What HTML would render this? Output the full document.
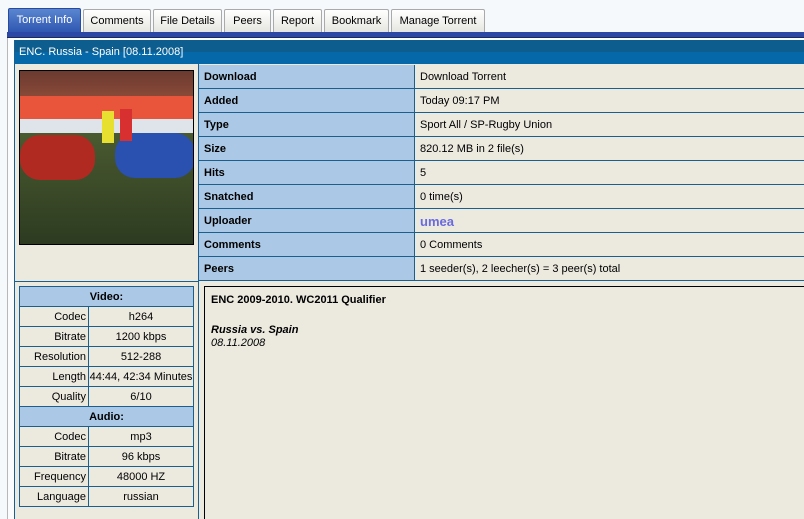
<!DOCTYPE html>
<html><head><meta charset="utf-8"><style>
*{margin:0;padding:0;box-sizing:border-box}
html,body{width:804px;height:519px;overflow:hidden}
body{background:#f6f9fc;font-family:"Liberation Sans",Arial,sans-serif;font-size:11px;color:#000;position:relative}
.tab{position:absolute;top:9px;height:23px;border:1px solid #aaa;border-bottom:none;background:linear-gradient(#fff,#e6e6e0);font-size:11px;text-align:center;line-height:22px;border-radius:2px 2px 0 0}
.tab.on{background:linear-gradient(#5a86d0,#2d55b0);color:#fff;border-color:#2a4aa0;top:8px;height:25px;line-height:23px}
.abs{position:absolute}
.lbl{position:absolute;left:199px;width:216px;height:24px;background:#abc9e6;border-bottom:1px solid #1b5f8e;border-right:1px solid #1b5f8e;font-weight:bold;padding-left:5px;padding-top:1px;line-height:23px}
.val{position:absolute;left:415px;width:389px;height:24px;background:#ece9df;border-bottom:1px solid #1b5f8e;padding-left:5px;padding-top:1px;line-height:23px}
.it td{border:1px solid #1b5f8e;height:20px;padding:0 2px;font-size:11px}
</style></head><body>
<div class="tab on" style="left:8px;width:73px">Torrent Info</div>
<div class="tab" style="left:83px;width:68px">Comments</div>
<div class="tab" style="left:153px;width:69px">File Details</div>
<div class="tab" style="left:224px;width:47px">Peers</div>
<div class="tab" style="left:273px;width:49px">Report</div>
<div class="tab" style="left:324px;width:65px">Bookmark</div>
<div class="tab" style="left:391px;width:94px">Manage Torrent</div>
<div class="abs" style="left:7px;top:32px;width:797px;height:5px;background:#2c48a6"></div>
<div class="abs" style="left:7px;top:37px;width:797px;height:1px;background:#1a2a5a"></div>
<div class="abs" style="left:7px;top:38px;width:797px;height:481px;background:#fbfcfd;border-left:1px solid #b8b8b8"></div>
<div class="abs" style="left:14px;top:40px;width:790px;height:479px;background:#ece9df;border-left:1px solid #1b5f8e"></div>
<div class="abs" style="left:15px;top:40px;width:789px;height:12px;background:#0d5e8f"></div>
<div class="abs" style="left:15px;top:52px;width:789px;height:12px;background:#0568a8"></div>
<div class="abs" style="left:19px;top:46px;color:#fff;font-size:11px">ENC. Russia - Spain [08.11.2008]</div>
<div class="abs" style="left:198px;top:64px;width:1px;height:455px;background:#1b5f8e"></div>
<div class="abs" style="left:15px;top:281px;width:184px;height:1px;background:#1b5f8e"></div>
<div class="abs" style="left:19px;top:70px;width:175px;height:175px;border:1px solid #000;background:#2b3a1e;overflow:hidden">
<div class="abs" style="left:0;top:0;width:175px;height:26px;background:linear-gradient(#6b3a30,#8a4a38)"></div>
<div class="abs" style="left:0;top:25px;width:175px;height:37px;background:#e8553a"></div>
<div class="abs" style="left:0;top:48px;width:175px;height:14px;background:#dfe4ea"></div>
<div class="abs" style="left:0;top:62px;width:175px;height:113px;background:linear-gradient(#4a5a30,#2c3a20)"></div>
<div class="abs" style="left:0;top:64px;width:75px;height:45px;background:#b02a22;border-radius:20px"></div>
<div class="abs" style="left:95px;top:62px;width:80px;height:45px;background:#2a50b0;border-radius:20px"></div>
<div class="abs" style="left:82px;top:40px;width:12px;height:32px;background:#e8e030"></div>
<div class="abs" style="left:100px;top:38px;width:12px;height:32px;background:#d83030"></div>
</div>
<div class="lbl" style="top:65px">Download</div><div class="val" style="top:65px">Download Torrent</div>
<div class="lbl" style="top:89px">Added</div><div class="val" style="top:89px">Today 09:17 PM</div>
<div class="lbl" style="top:113px">Type</div><div class="val" style="top:113px">Sport All / SP-Rugby Union</div>
<div class="lbl" style="top:137px">Size</div><div class="val" style="top:137px">820.12 MB in 2 file(s)</div>
<div class="lbl" style="top:161px">Hits</div><div class="val" style="top:161px">5</div>
<div class="lbl" style="top:185px">Snatched</div><div class="val" style="top:185px">0 time(s)</div>
<div class="lbl" style="top:209px">Uploader</div><div class="val" style="top:209px;color:#6a6ae0;font-weight:bold;font-size:13px">umea</div>
<div class="lbl" style="top:233px">Comments</div><div class="val" style="top:233px">0 Comments</div>
<div class="lbl" style="top:257px">Peers</div><div class="val" style="top:257px">1 seeder(s), 2 leecher(s) = 3 peer(s) total</div>
<table class="it abs" style="left:19px;top:286px;width:175px;border-collapse:collapse">
<tr><td colspan="2" style="background:#abc9e6;text-align:center;font-weight:bold">Video:</td></tr>
<tr><td style="text-align:right;width:69px">Codec</td><td style="text-align:center">h264</td></tr>
<tr><td style="text-align:right">Bitrate</td><td style="text-align:center">1200 kbps</td></tr>
<tr><td style="text-align:right">Resolution</td><td style="text-align:center">512-288</td></tr>
<tr><td style="text-align:right">Length</td><td style="text-align:center;white-space:nowrap;padding:0">44:44, 42:34 Minutes</td></tr>
<tr><td style="text-align:right">Quality</td><td style="text-align:center">6/10</td></tr>
<tr><td colspan="2" style="background:#abc9e6;text-align:center;font-weight:bold">Audio:</td></tr>
<tr><td style="text-align:right">Codec</td><td style="text-align:center">mp3</td></tr>
<tr><td style="text-align:right">Bitrate</td><td style="text-align:center">96 kbps</td></tr>
<tr><td style="text-align:right">Frequency</td><td style="text-align:center">48000 HZ</td></tr>
<tr><td style="text-align:right">Language</td><td style="text-align:center">russian</td></tr>
</table>
<div class="abs" style="left:204px;top:286px;width:610px;height:240px;border:1px solid #000;padding:7px 6px">
<div style="font-weight:bold">ENC 2009-2010. WC2011 Qualifier</div>
<div style="height:18px"></div>
<div style="font-weight:bold;font-style:italic">Russia vs. Spain</div>
<div style="font-style:italic;margin-top:1px">08.11.2008</div>
</div>
</body></html>
